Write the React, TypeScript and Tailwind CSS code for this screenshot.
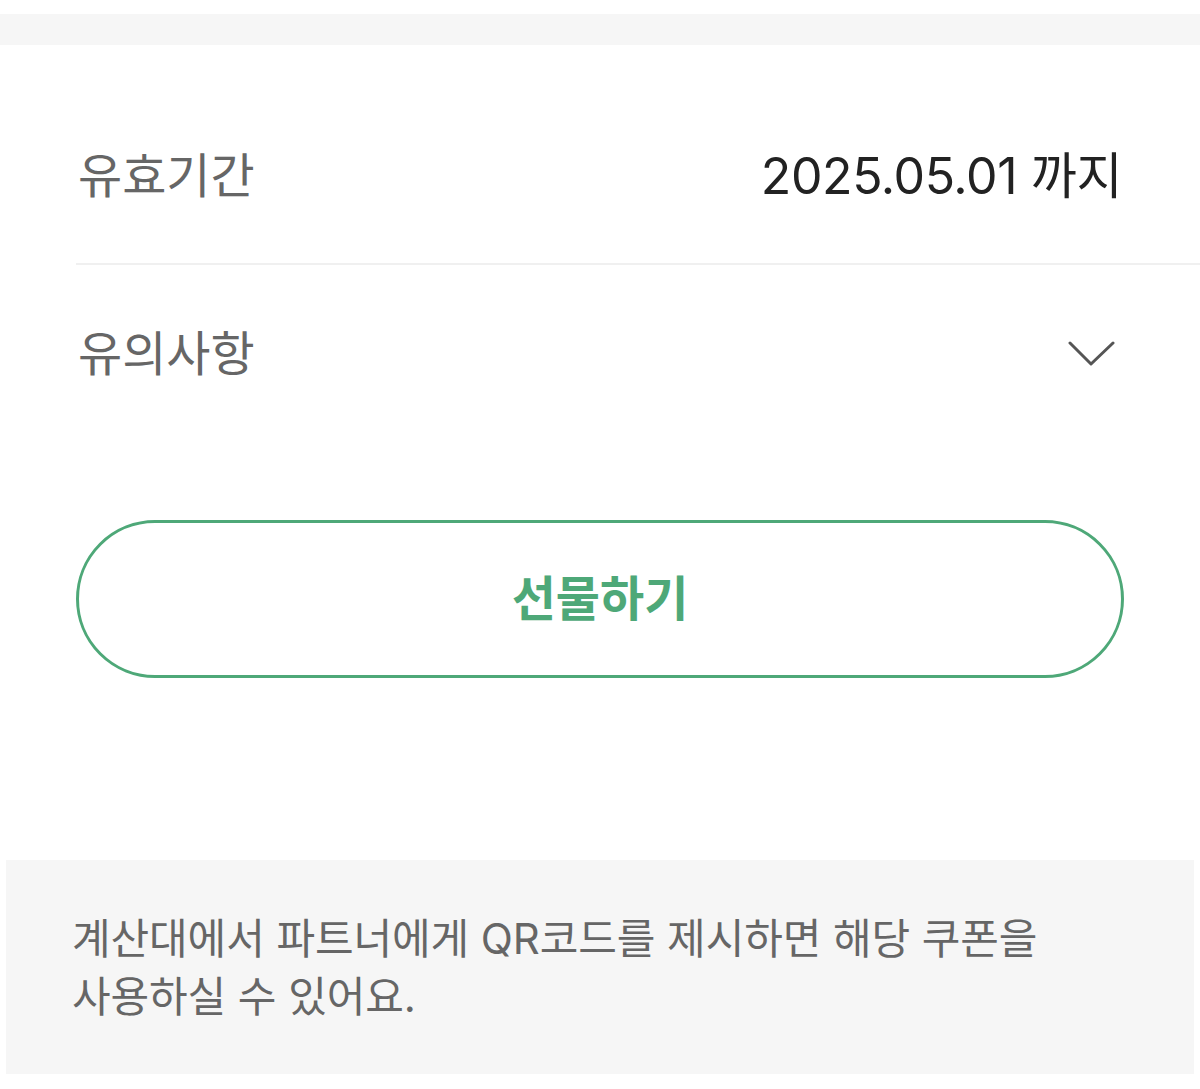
import React from "react";

export default function App() {
  const font = { fontFamily: '"Inter", "Noto Sans CJK KR", sans-serif' };
  return (
    <div className="w-[1200px] h-[1089px] bg-white overflow-hidden" style={font}>
      <div className="h-[14px]" />
      <div className="h-[31px] bg-[#f6f6f6]" />
      <div className="ml-[76px] border-b-2 border-[#f0f0f0]">
        <div className="h-[218px] flex items-center justify-between pt-[44px] pl-[2px] pr-[78px]">
          <span className="text-[48px] leading-none text-[#666666]">유효기간</span>
          <span className="text-[50px] leading-none text-[#222222] tracking-[-0.4px]">2025.05.01 까지</span>
        </div>
      </div>
      <div className="ml-[76px] h-[178px] flex items-center justify-between pl-[2px] pr-[84px]">
        <span className="text-[48px] leading-none text-[#666666]">유의사항</span>
        <svg width="48" height="30" viewBox="0 0 48 30" fill="none">
          <polyline points="2,4 23,25 45,4" stroke="#555555" strokeWidth="3" strokeLinecap="round" strokeLinejoin="round" />
        </svg>
      </div>
      <div className="mt-[77px] mx-[76px] h-[158px] rounded-full border-[3px] border-[#4ea878] flex items-center justify-center">
        <span className="text-[48px] font-bold leading-none text-[#4ea878]">선물하기</span>
      </div>
      <div className="mt-[182px] mx-[6px] h-[214px] bg-[#f6f6f6] pl-[66px] pt-[50px]">
        <p className="text-[42px] leading-[58px] text-[#666666] tracking-[-0.1px]">
          계산대에서 파트너에게 QR코드를 제시하면 해당 쿠폰을
          <br />
          사용하실 수 있어요.
        </p>
      </div>
    </div>
  );
}
